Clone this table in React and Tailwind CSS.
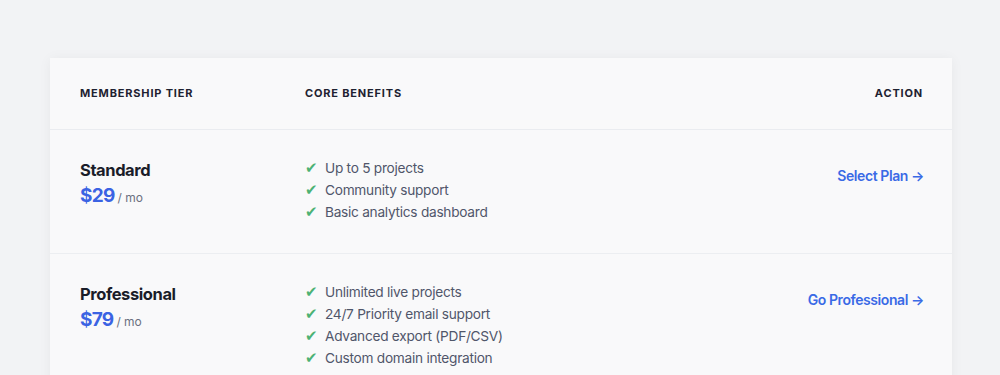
const plans = [
  {
    name: 'Standard',
    price: '$29',
    benefits: ['Up to 5 projects', 'Community support', 'Basic analytics dashboard'],
    action: 'Select Plan',
  },
  {
    name: 'Professional',
    price: '$79',
    benefits: [
      'Unlimited live projects',
      '24/7 Priority email support',
      'Advanced export (PDF/CSV)',
      'Custom domain integration',
    ],
    action: 'Go Professional',
  },
];

export default function App() {
  return (
    <div
      className="min-h-[375px] bg-[#f2f3f5] pt-[58px] pl-[50px]"
      style={{ fontFamily: 'Inter, "Noto Sans", sans-serif' }}
    >
      <div className="w-[902px] bg-[#f9f9fa] shadow-[0_1px_12px_rgba(20,25,40,0.05)]">
        <div className="grid grid-cols-[225px_1fr_auto] items-center h-[72px] pl-[30px] pr-[29px] border-b border-[#eaecf0] text-[11px] font-bold tracking-[0.075em] text-[#1e2231]">
          <div>MEMBERSHIP TIER</div>
          <div>CORE BENEFITS</div>
          <div>ACTION</div>
        </div>

        {plans.map((p) => (
          <div
            key={p.name}
            className="grid grid-cols-[225px_1fr_auto] items-start pl-[30px] pr-[28px] pt-[27px] pb-[30px] border-b border-[#eceef1]"
          >
            <div className="pt-[1px]">
              <div className="text-[16.5px] leading-[24px] font-bold text-[#1a1d29] tracking-[-0.025em]">{p.name}</div>
              <div className="flex items-baseline gap-[3px] mt-[1px]">
                <span className="text-[19px] leading-[26px] font-bold text-[#3b63e3] tracking-[-0.04em]">{p.price}</span>
                <span className="text-[12px] text-[#6b7080]">/ mo</span>
              </div>
            </div>

            <ul>
              {p.benefits.map((b) => (
                <li key={b} className="flex items-center h-[22px] text-[13.7px] text-[#50566a] tracking-[-0.02em]">
                  <span className="w-[20px] text-[15px] leading-[22px] text-[#4cb274]">✔</span>
                  {b}
                </li>
              ))}
            </ul>

            <a
              href="#"
              className="mt-[9px] text-[14px] leading-[20px] font-semibold text-[#3a6ae6] tracking-[-0.03em]"
            >
              {p.action} →
            </a>
          </div>
        ))}
      </div>
    </div>
  );
}
